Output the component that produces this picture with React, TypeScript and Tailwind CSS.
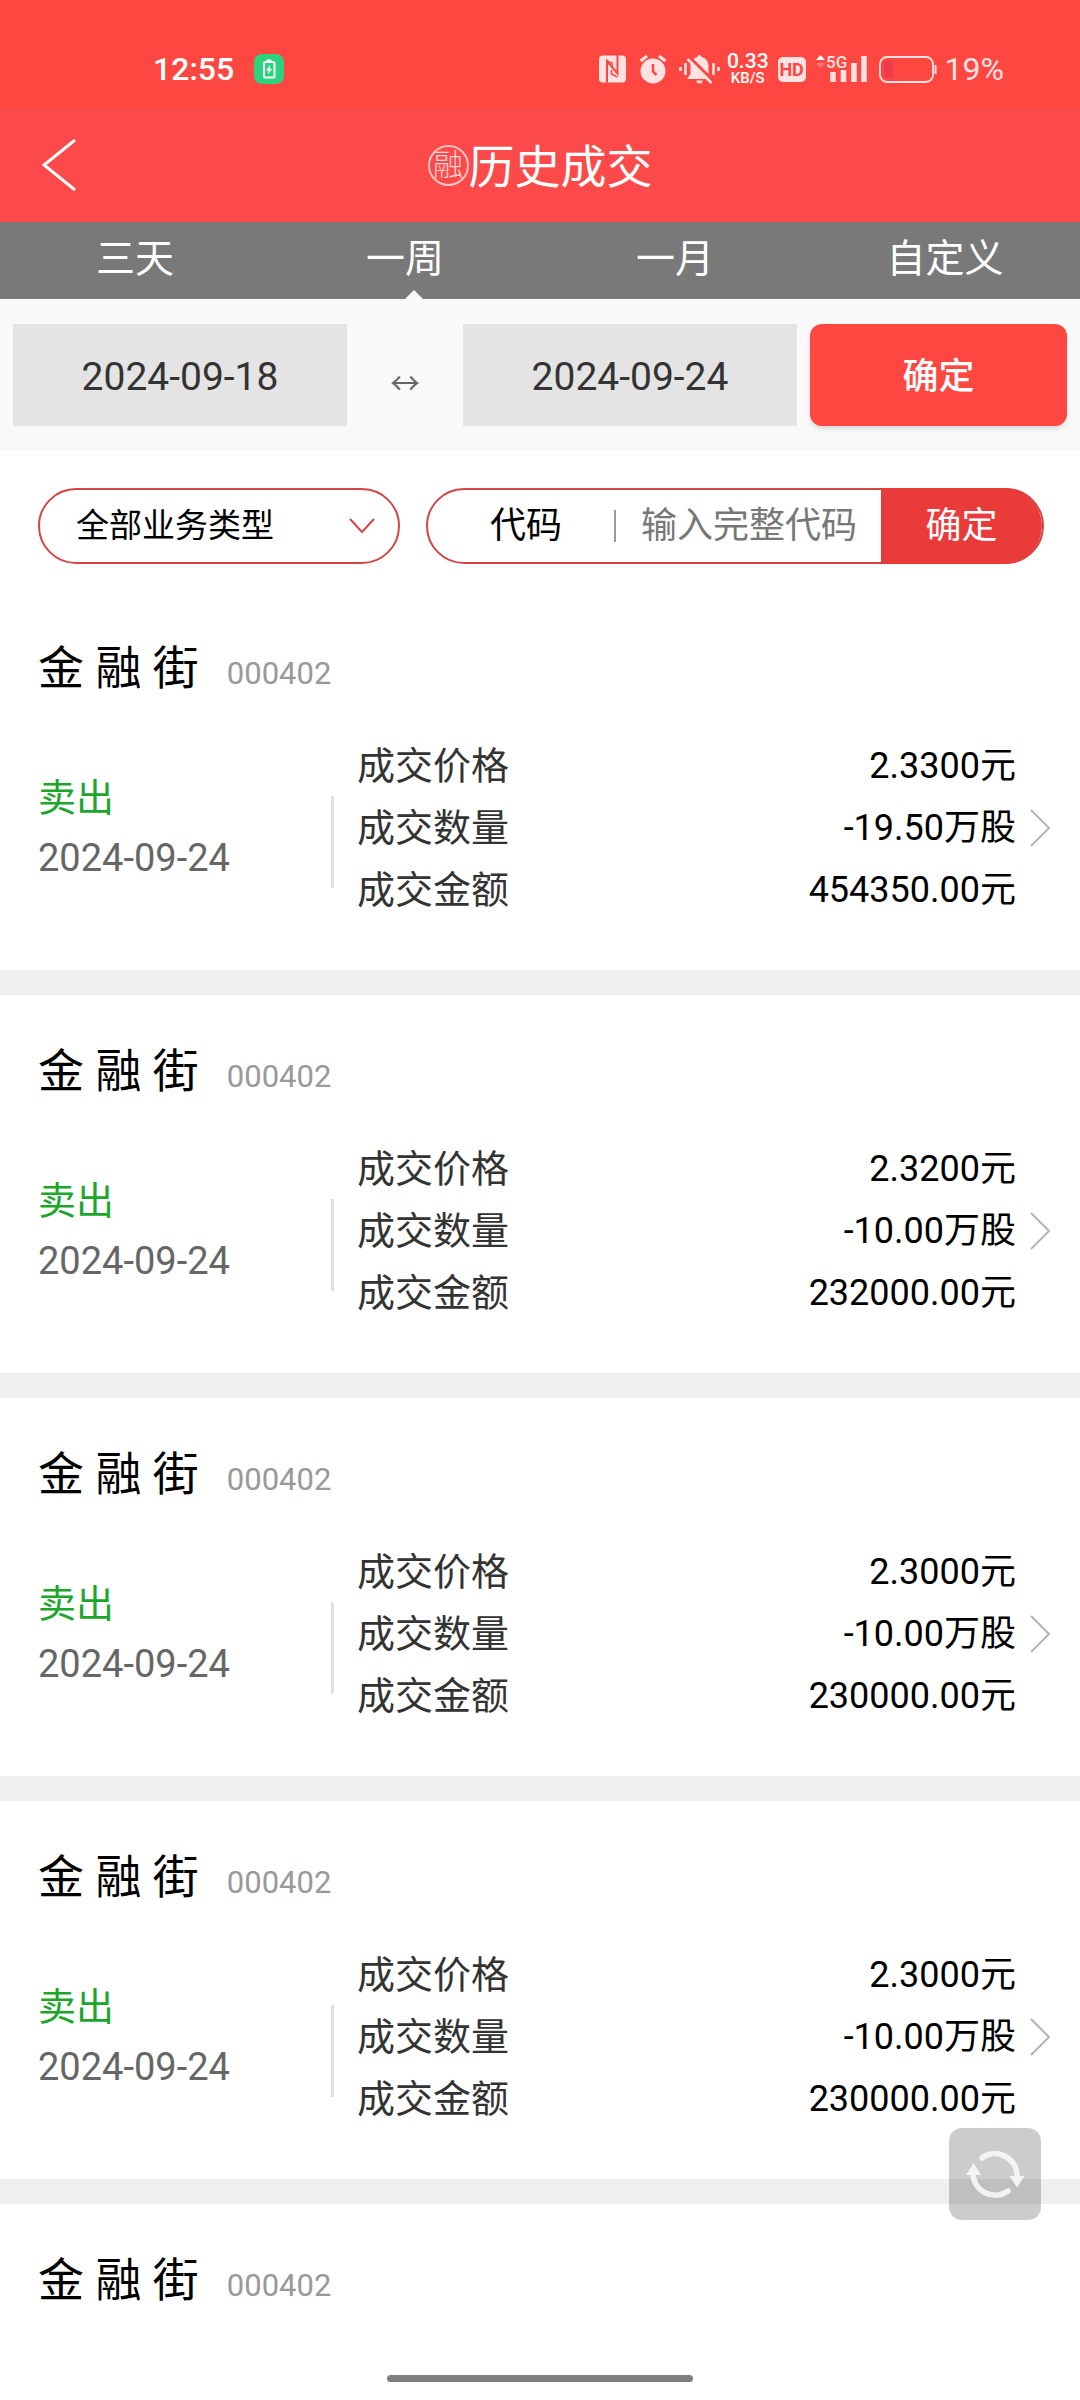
import React, { useState } from 'react'

type Deal = {
  name: string
  code: string
  side: string
  date: string
  price: string
  quantity: string
  amount: string
}

const deals: Deal[] = [
  { name: '金 融 街', code: '000402', side: '卖出', date: '2024-09-24', price: '2.3300元', quantity: '-19.50万股', amount: '454350.00元' },
  { name: '金 融 街', code: '000402', side: '卖出', date: '2024-09-24', price: '2.3200元', quantity: '-10.00万股', amount: '232000.00元' },
  { name: '金 融 街', code: '000402', side: '卖出', date: '2024-09-24', price: '2.3000元', quantity: '-10.00万股', amount: '230000.00元' },
  { name: '金 融 街', code: '000402', side: '卖出', date: '2024-09-24', price: '2.3000元', quantity: '-10.00万股', amount: '230000.00元' },
  { name: '金 融 街', code: '000402', side: '卖出', date: '2024-09-24', price: '2.3000元', quantity: '-10.00万股', amount: '230000.00元' },
]

const tabs = ['三天', '一周', '一月', '自定义']

const StatusBar = () => (
  <div className="h-[108px] shrink-0 bg-[#ff4741] pt-[49px] pl-[153px] pr-[76px] flex items-start justify-between text-white">
    <div className="flex items-center gap-5 h-10">
      <span className="text-[32px] leading-10 font-medium">12:55</span>
      <svg className="size-[30px]" viewBox="0 0 30 30">
        <rect width="30" height="30" rx="8" fill="#2dd27d" />
        <rect x="12.5" y="5.5" width="5" height="3" fill="#fff" />
        <rect x="10" y="8" width="10.5" height="15.5" rx="1.5" fill="none" stroke="#fff" strokeWidth="2" />
        <path d="M16 11l-4 5.500h2.600l-.4 3.800 4-5.600h-2.700z" fill="#fff" />
      </svg>
    </div>
    <div className="flex items-center h-10 text-[#ffe3e2]">
      <svg className="w-[27px] h-7" viewBox="0 0 27 28">
        <rect y="0.5" width="27" height="27" rx="4" fill="currentColor" />
        <path d="M8 27.500V6L18.500 18.500V0" fill="none" stroke="#ff4741" strokeWidth="2" />
        <path d="M8 6l5 2v5M18.500 22l-6-3v-4" fill="none" stroke="#ff4741" strokeWidth="1.600" />
      </svg>
      <svg className="ml-[13px] w-7 h-[30px]" viewBox="0 0 28 30">
        <circle cx="14" cy="17" r="12.500" fill="currentColor" />
        <path d="M1.500 7L8 2M26.500 7L20 2" stroke="currentColor" strokeWidth="3" />
        <path d="M14 10v7.500l3.500 3.500" fill="none" stroke="#ff4741" strokeWidth="2.500" />
      </svg>
      <svg className="ml-3 w-[41px] h-[30px]" viewBox="0 0 41 30">
        <path d="M1.500 13v4M6.500 9v12M34.500 9v12M39.500 13v4" stroke="currentColor" strokeWidth="2.600" />
        <path d="M20.500 1c1.400 0 2 1 2 2 4.500 1 7 4.500 7 9v8l3.500 5H8l3.500-5v-8c0-4.500 2.500-8 7-9 0-1 .6-2 2-2z" fill="currentColor" />
        <path d="M17.500 26.500h6a3 3 0 01-6 0z" fill="currentColor" />
        <path d="M10.500 3l24 24" stroke="#ff4741" strokeWidth="3" />
        <path d="M8.500 5l24 24" stroke="currentColor" strokeWidth="2.500" />
      </svg>
      <span className="ml-[7px] flex flex-col items-center font-medium text-white">
        <span className="text-[21px] leading-[19px]">0.33</span>
        <span className="text-[15px] leading-[15px]">KB/S</span>
      </span>
      <span className="ml-[9px] w-7 h-[25px] rounded-[5px] bg-[#ffe3e2] text-[#ff4741] text-[18px] leading-[25px] font-bold text-center">
        HD
      </span>
      <svg className="ml-[10px] w-[51px] h-[30px]" viewBox="0 0 51 30">
        <path d="M0 6l4.500-5 4.500 5z" fill="#fff" />
        <path d="M0 9l4.500 5 4.500-5z" fill="#ff7a76" />
        <text x="10" y="14" fontSize="17" fontWeight="500" fill="currentColor">5G</text>
        <path d="M17 18v10M27.500 16v12M38 9v19M48 2v26" stroke="currentColor" strokeWidth="5.500" />
      </svg>
      <svg className="ml-3 w-[58px] h-[27px]" viewBox="0 0 58 27">
        <rect x="1" y="1" width="53" height="25" rx="7" fill="none" stroke="currentColor" strokeWidth="1.800" />
        <rect x="5" y="4.500" width="9" height="18" rx="3" fill="#ee3a4c" />
        <path d="M56.500 9v9" stroke="currentColor" strokeWidth="2" />
      </svg>
      <span className="ml-2 text-[32px] leading-10">19%</span>
    </div>
  </div>
)

const DealRow = ({ deal }: { deal: Deal }) => (
  <li className="pt-12 pb-[49px] pl-[38px] pr-[30px] border-b-[25px] border-[#efefef]">
    <div className="h-14 flex items-baseline gap-7 leading-[56px]">
      <h2 className="text-[46px] text-black">{deal.name}</h2>
      <span className="text-[31px] text-[#999]">{deal.code}</span>
    </div>
    <div className="mt-[39px] flex items-center">
      <div className="w-[293px] shrink-0 text-[38px] leading-[60px]">
        <p className="text-[#1ca62c]">{deal.side}</p>
        <p className="text-[#666]">{deal.date}</p>
      </div>
      <div className="mt-7 w-[3px] h-[92px] bg-[#e0e0e0]" />
      <dl className="flex-1 ml-[23px] mr-[14px] leading-[62px]">
        <div className="flex justify-between">
          <dt className="text-[38px] text-[#333]">成交价格</dt>
          <dd className="text-[36px] text-black">{deal.price}</dd>
        </div>
        <div className="flex justify-between">
          <dt className="text-[38px] text-[#333]">成交数量</dt>
          <dd className="text-[36px] text-black">{deal.quantity}</dd>
        </div>
        <div className="flex justify-between">
          <dt className="text-[38px] text-[#333]">成交金额</dt>
          <dd className="text-[36px] text-black">{deal.amount}</dd>
        </div>
      </dl>
      <svg className="w-5 h-[38px]" viewBox="0 0 20 38" fill="none" stroke="#b5b5b5" strokeWidth="2">
        <path d="M1 1l18 18L1 37" />
      </svg>
    </div>
  </li>
)

const App = () => {
  const [tab, setTab] = useState('一周')

  return (
    <div className="relative h-screen flex flex-col overflow-hidden bg-white font-['Roboto','Noto_Sans_CJK_SC',sans-serif]">
      <StatusBar />

      <header className="relative h-[114px] shrink-0 bg-[#fb4a49] flex items-center justify-center text-white">
        <button aria-label="返回" className="absolute left-[42px]">
          <svg className="w-[34px] h-[52px]" viewBox="0 0 34 52" fill="none" stroke="currentColor" strokeWidth="3">
            <path d="M33 1L2 26l31 25" />
          </svg>
        </button>
        <span className="size-[41px] rounded-full border-2 border-[#ffc4c2] text-[#ffd6d5] text-[30px] leading-[35px] font-light flex justify-center">
          融
        </span>
        <h1 className="pt-1 text-[46px] leading-[60px]">历史成交</h1>
      </header>

      <nav className="h-[77px] shrink-0 bg-[#797979] grid grid-cols-4">
        {tabs.map((name) => (
          <button
            key={name}
            onClick={() => setTab(name)}
            className="relative pb-1 text-white text-[39px] leading-[60px]"
          >
            {name}
            {tab === name && (
              <svg className="absolute left-1/2 bottom-0 w-[18px] h-[9px]" viewBox="0 0 18 9" fill="#f9f9f9">
                <path d="M0 9l9-9 9 9z" />
              </svg>
            )}
          </button>
        ))}
      </nav>

      <form className="shrink-0 bg-[#f9f9f9] px-[13px] py-[25px] flex items-center" onSubmit={(e) => e.preventDefault()}>
        <input
          aria-label="开始日期"
          defaultValue="2024-09-18"
          className="min-w-0 flex-1 h-[102px] pt-1 bg-[#e4e4e4] text-center text-[39px] text-[#333]"
        />
        <span className="w-[116px] pt-4 text-center text-[30px] text-[#666]">↔</span>
        <input
          aria-label="结束日期"
          defaultValue="2024-09-24"
          className="min-w-0 flex-1 h-[102px] pt-1 bg-[#e4e4e4] text-center text-[39px] text-[#333]"
        />
        <button className="ml-[13px] w-[257px] h-[102px] pt-1 rounded-xl bg-[#ff4741] shadow-md text-white text-[36px] font-medium">
          确定
        </button>
      </form>

      <form className="shrink-0 pl-[38px] pr-9 pt-[37px] pb-7 flex gap-[26px]" onSubmit={(e) => e.preventDefault()}>
        <div className="relative w-[362px] shrink-0">
          <select
            aria-label="业务类型"
            className="w-full h-[76px] appearance-none rounded-full border-2 border-[#d24746] bg-white pl-9 text-[33px] text-black"
          >
            <option>全部业务类型</option>
          </select>
          <svg
            className="pointer-events-none absolute right-[25px] top-[30px] w-[26px] h-4"
            viewBox="0 0 26 16"
            fill="none"
            stroke="#d24746"
            strokeWidth="2"
          >
            <path d="M1 1l12 13L25 1" />
          </svg>
        </div>
        <div className="min-w-0 flex-1 h-[76px] rounded-full border-2 border-[#d24746] flex items-center text-[36px]">
          <label htmlFor="code" className="shrink-0 pl-[62px] pr-[52px] text-black">
            代码
          </label>
          <div className="w-[2px] h-8 bg-[#999]" />
          <input
            id="code"
            placeholder="输入完整代码"
            className="min-w-0 flex-1 pl-[25px] text-black placeholder:text-[#777]"
          />
          <button className="-my-[2px] w-[161px] h-[76px] shrink-0 rounded-r-full bg-[#ea3b3b] text-white">确定</button>
        </div>
      </form>

      <ul className="flex-1 min-h-0 overflow-hidden">
        {deals.map((deal, i) => (
          <DealRow key={i} deal={deal} />
        ))}
      </ul>

      <button
        aria-label="刷新"
        className="absolute right-[39px] bottom-[180px] size-[92px] rounded-[13px] bg-black/20 flex items-center justify-center"
      >
        <svg className="size-[60px]" viewBox="0 0 60 60" fill="none">
          <g opacity="0.800">
            <path
              d="M17 14A22 22 0 0 1 52 31M43 47A22 22 0 0 1 8 29"
              stroke="#fff"
              strokeWidth="5.500"
              strokeLinecap="round"
            />
            <path d="M44.500 32h15L52 43.500zM1 31h15L8.500 19z" fill="#fff" />
          </g>
        </svg>
      </button>

      <div className="h-11 shrink-0 bg-white flex items-center justify-center">
        <div className="w-[306px] h-[7px] rounded-full bg-[#808080]" />
      </div>
    </div>
  )
}

export default App
